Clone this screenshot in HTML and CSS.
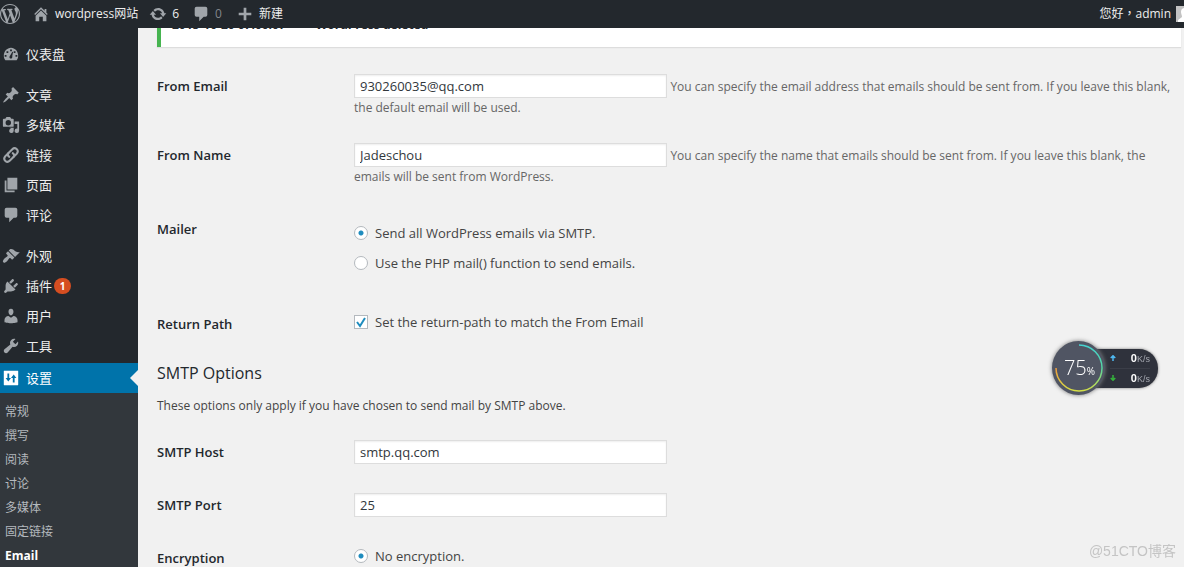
FILE: index.html
```html
<!DOCTYPE html>
<html lang="zh-CN">
<head>
<meta charset="utf-8">
<title>Email - wordpress网站</title>
<link rel="stylesheet" href="styles.css">
</head>
<body>
<header class="adminbar">
  <a class="bar-item wp-logo" href="#" aria-label="WordPress"><svg width="20" height="20" viewBox="0 0 20 20"><path fill="currentColor" d="M20 10c0-5.510-4.490-10-10-10C4.480 0 0 4.490 0 10c0 5.520 4.480 10 10 10 5.510 0 10-4.480 10-10zM7.780 15.370L4.370 6.220c.55-.02 1.170-.08 1.170-.08.5-.06.44-1.130-.06-1.110 0 0-1.450.11-2.370.11-.18 0-.37 0-.58-.01C4.120 2.690 6.870 1.110 10 1.110c2.330 0 4.450.87 6.050 2.340-.68-.11-1.650.39-1.650 1.580 0 .74.45 1.360.9 2.100.35.61.55 1.360.55 2.460 0 1.490-1.400 5-1.400 5l-3.030-8.370c.54-.02.82-.17.82-.17.5-.05.44-1.250-.06-1.220 0 0-1.440.12-2.380.12-.87 0-2.330-.12-2.330-.12-.5-.03-.56 1.200-.06 1.220l.92.08 1.260 3.410zM17.410 10c.24-.64.74-1.870.43-4.250.7 1.290 1.050 2.710 1.050 4.250 0 3.290-1.730 6.240-4.400 7.780.97-2.590 1.940-5.200 2.920-7.780zM6.100 18.090C3.120 16.650 1.110 13.530 1.110 10c0-1.300.23-2.480.72-3.590C3.250 10.300 4.670 14.200 6.100 18.090zm4.030-6.630l2.580 6.980c-.86.29-1.760.45-2.710.45-.79 0-1.570-.11-2.290-.33.81-2.380 1.620-4.740 2.420-7.100z"/></svg></a>
  <a class="bar-item site" href="#"><svg width="18" height="18" viewBox="0 0 20 20"><path fill="currentColor" d="M16 8.500l1.530 1.530-1.060 1.060L10 4.600l-6.470 6.490-1.060-1.060L10 2.500l4 4v-2h2v4zm-6-2.460l6 5.990V18H12v-5H8v5H4v-5.970z"/></svg>wordpress网站</a>
  <a class="bar-item updates" href="#"><svg width="18" height="18" viewBox="0 0 20 20"><path fill="currentColor" d="M10.200 3.280c3.530 0 6.430 2.610 6.920 6h2.080l-3.500 4-3.500-4h2.320c-.45-1.970-2.210-3.450-4.320-3.450-1.450 0-2.730.71-3.540 1.780L4.950 5.660C6.230 4.200 8.110 3.280 10.200 3.280zm-.4 13.440c-3.520 0-6.430-2.610-6.920-6H.8l3.500-4 3.500 4H5.480c.45 1.970 2.210 3.450 4.320 3.450 1.450 0 2.730-.71 3.540-1.780l1.710 1.950c-1.280 1.460-3.150 2.380-5.250 2.380z"/></svg>6</a>
  <a class="bar-item comments" href="#"><svg width="18" height="18" viewBox="0 0 20 20"><path fill="currentColor" d="M5 2h10a2 2 0 0 1 2 2v7a2 2 0 0 1-2 2h-2l-5 5v-5H5a2 2 0 0 1-2-2V4a2 2 0 0 1 2-2z"/></svg><span>0</span></a>
  <a class="bar-item new" href="#"><svg width="18" height="18" viewBox="0 0 20 20"><path fill="currentColor" d="M17 8.500v3h-5.500V17h-3v-5.500H3v-3h5.500V3h3v5.500z"/></svg>新建</a>
  <a class="bar-item account" href="#"><span lang="zh-TW">您好，admin</span><svg class="avatar" width="16" height="16" viewBox="0 0 16 16"><path fill="#c3c3c3" d="M0 0h16v16H0z"/><path fill="#fff" d="M9 2a4 4 0 0 1 4 4c0 2-1 3-1 4l4 3v3H2v-2l4-3c0-2-1-3-1-5a4 4 0 0 1 4-4z"/></svg></a>
</header>
<div class="layout">
  <nav class="sidebar">
    <ul class="menu">
      <li><a href="#"><svg width="18" height="18" viewBox="0 0 20 20"><path fill="currentColor" fill-rule="evenodd" d="M3.760 17h12.480C17.340 15.630 18 13.890 18 12c0-4.970-3.580-9-8-9s-8 4.030-8 9c0 1.890.66 3.630 1.760 5zM9 5h2v2H9zM5 7h2v2H5zm8 0h2v2h-2zM3 11h2v2H3zm12 0h2v2h-2zm-3.500-3.500l.8.400-.9 4.200c.4 1.600-.3 2.900-1.500 2.900s-1.900-1.200-1.500-2.300z"/></svg>仪表盘</a></li>
      <li class="after-gap"><a href="#"><svg width="18" height="18" viewBox="0 0 20 20"><path fill="currentColor" d="M10.440 3.020l1.820-1.820 6.360 6.350-1.830 1.820c-1.050-.68-2.480-.57-3.410.36l-.75.75c-.92.93-1.040 2.350-.35 3.410l-1.830 1.820-2.410-2.410-2.800 2.790c-.42.42-3.380 2.710-3.800 2.290s1.860-3.390 2.280-3.810l2.790-2.790L4.100 9.360l1.830-1.820c1.050.69 2.480.57 3.400-.36l.75-.75c.93-.92 1.050-2.350.36-3.410z"/></svg>文章</a></li>
      <li><a href="#"><svg width="18" height="18" viewBox="0 0 20 20"><path fill="currentColor" fill-rule="evenodd" d="M13 11V4c0-.55-.45-1-1-1h-1.670L9 1H5L3.670 3H2c-.55 0-1 .45-1 1v7c0 .55.45 1 1 1h10c.55 0 1-.45 1-1zM7 4.500a3 3 0 1 1 0 6 3 3 0 0 1 0-6zM14 6h5v10.500a2.500 2.500 0 1 1-2-2.450V9h-3zM8 13h5v3.500a2.500 2.500 0 1 1-2-2.450z"/></svg>多媒体</a></li>
      <li><a href="#"><svg width="18" height="18" viewBox="0 0 20 20"><g fill="none" stroke="currentColor" stroke-width="2.300" stroke-linecap="round"><path d="M8 12c-2-1-2-3-.5-4.500l4-4c3-3 8 1 5 5L13 12"/><path d="M12 8c2 1 2 3 .5 4.500l-4 4c-3 3-8-1-5-5L7 8"/></g></svg>链接</a></li>
      <li><a href="#"><svg width="18" height="18" viewBox="0 0 20 20"><path fill="currentColor" d="M6 15V2h11v13zm-1 1h9v2H3V5h2z"/></svg>页面</a></li>
      <li><a href="#"><svg width="18" height="18" viewBox="0 0 20 20"><path fill="currentColor" d="M5 2h10a2 2 0 0 1 2 2v7a2 2 0 0 1-2 2h-2l-5 5v-5H5a2 2 0 0 1-2-2V4a2 2 0 0 1 2-2z"/></svg>评论</a></li>
      <li class="after-gap"><a href="#"><svg width="18" height="18" viewBox="0 0 20 20"><path fill="currentColor" d="M14.480 11.060L7.410 3.990l1.500-1.500c.5-.56 2.300-.47 3.510.32 1.210.8 1.430 1.280 2.910 2.100 1.180.64 2.450 1.260 4.450.85zm-.71.710L6.700 4.700 4.930 6.470c-.39.390-.39 1.020 0 1.410l1.060 1.060c.39.390.39 1.030 0 1.420-.6.600-1.430 1.110-2.210 1.690-.35.260-.7.530-1.010.840C1.430 14.230.4 16.080 1.400 17.070c.99 1 2.840-.03 4.180-1.360.31-.31.58-.66.850-1.020.57-.78 1.080-1.610 1.690-2.210.39-.39 1.020-.39 1.410 0l1.060 1.060c.39.390 1.020.39 1.410 0z"/></svg>外观</a></li>
      <li><a href="#"><svg width="18" height="18" viewBox="0 0 20 20"><path fill="currentColor" d="M13.110 4.360L9.870 7.600 8 5.730l3.240-3.240c.35-.34 1.050-.2 1.560.32.52.51.66 1.210.31 1.550zm-8 1.770l.91-1.120 9.010 9.010-1.190.84c-.71.71-2.630 1.160-3.820 1.160H6.140L4.900 17.260c-.59.59-1.540.59-2.120 0-.59-.58-.59-1.530 0-2.120L4 13.900v-3.880c0-1.130.4-3.190 1.110-3.890zm7.260 3.970l3.240-3.240c.34-.35 1.040-.21 1.550.31.52.51.66 1.210.31 1.550l-3.240 3.250z"/></svg>插件<span class="badge">1</span></a></li>
      <li><a href="#"><svg width="18" height="18" viewBox="0 0 20 20"><path fill="currentColor" d="M10 9.250c-2.270 0-2.730-3.440-2.730-3.440C7 4.020 7.820 2 9.970 2c2.160 0 2.980 2.020 2.710 3.810 0 0-.41 3.440-2.680 3.440zm0 2.570L12.720 10c2.390 0 4.520 2.330 4.520 4.530v2.490s-3.650 1.130-7.240 1.130c-3.650 0-7.240-1.130-7.240-1.130v-2.490c0-2.250 1.940-4.480 4.470-4.480z"/></svg>用户</a></li>
      <li><a href="#"><svg width="18" height="18" viewBox="0 0 20 20"><path fill="currentColor" d="M16.680 9.770c-1.340 1.340-3.300 1.670-4.950.99l-5.410 6.520c-.99.99-2.590.99-3.580 0s-.99-2.590 0-3.570l6.520-5.420c-.68-1.650-.35-3.610.99-4.950 1.280-1.280 3.120-1.620 4.720-1.060l-2.890 2.890 2.820 2.820 2.860-2.870c.53 1.580.18 3.390-1.080 4.650z"/></svg>工具</a></li>
      <li class="current"><a href="#"><svg width="18" height="18" viewBox="0 0 20 20"><path fill="currentColor" fill-rule="evenodd" d="M3 2h14c1 0 1 0 1 1v14c0 1 0 1-1 1H3c-1 0-1 0-1-1V3c0-1 0-1 1-1zm3 3v5H4l3 4 3-4H8V5zm6 10h2v-5h2l-3-4-3 4h2z"/></svg>设置</a></li>
    </ul>
    <ul class="submenu">
      <li><a href="#">常规</a></li>
      <li><a href="#">撰写</a></li>
      <li><a href="#">阅读</a></li>
      <li><a href="#">讨论</a></li>
      <li><a href="#">多媒体</a></li>
      <li><a href="#">固定链接</a></li>
      <li><a class="active" href="#">Email</a></li>
    </ul>
  </nav>
  <main class="content">
    <div class="notice"><strong>2015-10-20 07:00:07</strong><strong>WordPress deleted</strong></div>
    <form class="form">
      <div class="row text-row">
        <label class="name" for="from">From Email</label>
        <div class="field"><input class="text" id="from" type="text" value="930260035@qq.com"> <span class="desc">You can specify the email address that emails should be sent from. If you leave this blank, the default email will be used.</span></div>
      </div>
      <div class="row text-row">
        <label class="name" for="fromname">From Name</label>
        <div class="field"><input class="text" id="fromname" type="text" value="Jadeschou"> <span class="desc">You can specify the name that emails should be sent from. If you leave this blank, the emails will be sent from WordPress.</span></div>
      </div>
      <div class="row mailer-row">
        <span class="name">Mailer</span>
        <div class="field options">
          <label><input class="radio" type="radio" name="mailer" checked>Send all WordPress emails via SMTP.</label>
          <label><input class="radio" type="radio" name="mailer">Use the PHP mail() function to send emails.</label>
        </div>
      </div>
      <div class="row path-row">
        <span class="name">Return Path</span>
        <div class="field options"><label><span class="tick"><input class="checkbox" type="checkbox" checked><svg width="12" height="12" viewBox="0 0 12 12"><path d="M2 6l3 4 5-8" fill="none" stroke="#1e8cbe" stroke-width="2"/></svg></span>Set the return-path to match the From Email</label></div>
      </div>
      <h2 class="heading">SMTP Options</h2>
      <p class="intro">These options only apply if you have chosen to send mail by SMTP above.</p>
      <div class="row smtp-row">
        <label class="name" for="host">SMTP Host</label>
        <div class="field"><input class="text" id="host" type="text" value="smtp.qq.com"></div>
      </div>
      <div class="row smtp-row">
        <label class="name" for="port">SMTP Port</label>
        <div class="field"><input class="text" id="port" type="text" value="25"></div>
      </div>
      <div class="row">
        <span class="name">Encryption</span>
        <div class="field options"><label><input class="radio" type="radio" name="encryption" checked>No encryption.</label></div>
      </div>
    </form>
  </main>
</div>
<aside class="monitor">
  <div class="dial">
    <svg width="54" height="54" viewBox="0 0 54 54">
      <defs><linearGradient id="arc" x1="0" y1="0" x2="0" y2="1"><stop offset="0" stop-color="#45d3d0"/><stop offset=".5" stop-color="#55d5a0"/><stop offset="1" stop-color="#d5df45"/></linearGradient>
      <linearGradient id="arc2" x1="0" y1="0" x2="0" y2="1"><stop offset="0" stop-color="#f09b3c"/><stop offset="1" stop-color="#d5df45"/></linearGradient></defs>
      <path d="M27 4a23 23 0 0 1 0 46" fill="none" stroke="url(#arc)" stroke-width="1.500"/>
      <path d="M27 50a23 23 0 0 1-23-23" fill="none" stroke="url(#arc2)" stroke-width="1.500"/>
    </svg>
    <div class="percent">75<small>%</small></div>
  </div>
  <div class="rates">
    <div class="rate up"><svg width="6" height="6" viewBox="0 0 8 8"><path d="M4 8V2M1 4l3-3 3 3" fill="none" stroke="currentColor" stroke-width="2"/></svg><span><b>0</b>K/s</span></div>
    <div class="rate down"><svg width="6" height="6" viewBox="0 0 8 8"><path d="M4 0v6M1 4l3 3 3-3" fill="none" stroke="currentColor" stroke-width="2"/></svg><span><b>0</b>K/s</span></div>
  </div>
</aside>
<div class="watermark">@51CTO博客</div>
</body>
</html>
```

FILE: styles.css
```css
* { box-sizing: border-box; }
html, body { height: 100%; }
body {
  margin: 0;
  display: flex;
  flex-direction: column;
  overflow: hidden;
  background: #f1f1f1;
  color: #444;
  font: 13px/20px "Open Sans", "Noto Sans CJK SC", sans-serif;
}
a { color: inherit; text-decoration: none; }
ul { margin: 0; padding: 0; list-style: none; }
svg { display: block; flex: none; }

.adminbar {
  display: flex;
  flex: none;
  align-items: center;
  height: 28px;
  background: #23282d;
  color: #eee;
  font-size: 12px;
}
.bar-item { display: flex; align-items: center; gap: 5px; }
.bar-item svg { color: #a0a5aa; }
.site { margin-left: 12px; }
.updates { margin-left: 11px; }
.comments { margin-left: 13px; }
.comments span { color: #82878c; }
.new { margin-left: 14px; }
.account { margin-left: auto; font-family: "Open Sans", "Noto Sans CJK TC", sans-serif; }
.avatar { margin-right: -8px; }

.layout { display: flex; flex: 1; min-height: 0; }
.sidebar {
  display: flex;
  flex: none;
  flex-direction: column;
  width: 138px;
  padding-top: 11px;
  background: #23282d;
  color: #eee;
}
.menu a {
  display: flex;
  align-items: center;
  gap: 6px;
  height: 30px;
  padding-left: 2px;
}
.menu svg { color: #a0a5aa; }
.after-gap { margin-top: 11px; }
.badge {
  width: 17px;
  margin-left: -4px;
  border-radius: 9px;
  background: #d54e21;
  color: #fff;
  font-size: 10px;
  font-weight: 700;
  line-height: 16px;
  text-align: center;
}
.current { position: relative; margin-top: 2px; background: #0073aa; color: #fff; }
.current svg { color: #fff; }
.current::after {
  content: "";
  position: absolute;
  top: 7px;
  right: 0;
  border: 8px solid transparent;
  border-left-width: 0;
  border-right-color: #f1f1f1;
}
.submenu {
  flex: 1;
  padding: 7px 0 0 5px;
  background: #32373c;
  color: #b4b9be;
  font-size: 12px;
  line-height: 24px;
}
.active { color: #fff; font-weight: 700; }

.content { flex: 1; min-width: 0; padding-left: 19px; overflow: hidden; }
.notice {
  display: flex;
  gap: 30px;
  height: 19px;
  margin-right: 3px;
  padding-left: 11px;
  overflow: hidden;
  border-left: 4px solid #46b450;
  background: #fff;
  box-shadow: 0 1px 1px #ddd;
  font-size: 12px;
}
.notice strong { margin-top: -13px; color: #23282d; }
.form { padding: 27px 10px 0 0; }
.row { display: grid; grid-template-columns: 197px 1fr; }
.name { padding-top: 2px; color: #23282d; font-weight: 600; }
.text-row { min-height: 69px; }
.text-row .field { line-height: 18px; }
.mailer-row { padding-top: 5px; min-height: 100px; }
.text {
  width: 313px;
  height: 24px;
  margin: 0;
  padding: 0 5px;
  border: 1px solid #ddd;
  background: #fff;
  box-shadow: inset 0 1px 2px #eee;
  color: #32373c;
  font: inherit;
  vertical-align: baseline;
}
.desc { color: #666; font-size: 12px; }
.options { display: flex; flex-direction: column; gap: 10px; }
.options label { display: flex; align-items: center; gap: 7px; }
.mailer-row .options { padding-top: 6px; }
.radio, .checkbox {
  width: 14px;
  height: 14px;
  margin: 0;
  appearance: none;
  border: 1px solid #b4b9be;
  background: #fff;
}
.radio { border-radius: 50%; }
.radio:checked { background: radial-gradient(circle, #1e8cbe 2px, #fff 3px); }
.checkbox { display: block; }
.tick { display: grid; }
.tick > * { grid-area: 1 / 1; place-self: center; pointer-events: none; }
.path-row { min-height: 49px; }
.heading { margin: 0; color: #23282d; font-size: 16px; font-weight: 400; line-height: 24px; }
.intro { margin: 11px 0 24px; font-size: 12px; }
.smtp-row { min-height: 53px; }

.monitor { position: fixed; top: 341px; right: 26px; display: flex; align-items: center; }
.dial {
  position: relative;
  width: 53px;
  height: 54px;
  border-radius: 50%;
  background: #505563;
  box-shadow: 0 0 4px #777;
  z-index: 1;
}
.percent {
  position: absolute;
  inset: 0;
  padding-left: 2px;
  color: #fff;
  font: 300 20px/54px "Open Sans", sans-serif;
  text-align: center;
}
.percent small { font-size: 10px; font-weight: 400; }
.rates {
  width: 80px;
  margin-left: -27px;
  padding: 0 8px 0 32px;
  border-radius: 0 19px 19px 0;
  background: #2f323c;
  box-shadow: 0 0 3px #777;
  color: #a5a8b0;
  font: 9px/18px "Liberation Sans", sans-serif;
}
.rate { display: flex; align-items: center; justify-content: space-between; }
.rate + .rate { border-top: 1px solid #3b3e48; }
.rate b { color: #fff; font-size: 11px; }
.up svg { color: #4fb8f0; }
.down svg { color: #35b43c; }
.watermark {
  position: fixed;
  right: 8px;
  bottom: 6px;
  color: #c4c4c4;
  font: 14px/20px "Liberation Sans", "Noto Sans CJK SC", sans-serif;
}
```
